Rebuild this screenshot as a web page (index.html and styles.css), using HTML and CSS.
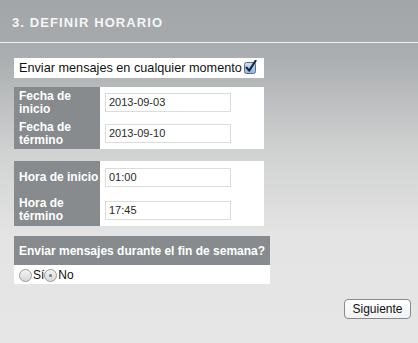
FILE: index.html
```html
<!DOCTYPE html>
<html>
<head>
<meta charset="utf-8">
<link rel="stylesheet" href="styles.css">
</head>
<body>
<div class="page">
  <div class="header"><h1 class="title">3. DEFINIR HORARIO</h1></div>
  <div class="content">
    <div class="anytime">
      <span class="anytime-text">Enviar mensajes en cualquier momento</span>
      <svg class="check" width="13" height="14" viewBox="0 0 13 14">
        <defs><linearGradient id="cb" x1="0" y1="0" x2="0" y2="1"><stop offset="0" stop-color="#cfe0f2"/><stop offset="1" stop-color="#8fb4de"/></linearGradient></defs>
        <rect x="0.5" y="2.5" width="11" height="11" rx="2" fill="url(#cb)" stroke="#5b6f88"/>
        <path d="M2.6 7.6 L5.2 10.6 L11.6 0.8" fill="none" stroke="#13233f" stroke-width="2.1" stroke-linecap="round" stroke-linejoin="round"/>
      </svg>
    </div>

    <div class="form-table dates">
      <div class="label">Fecha de inicio</div>
      <div class="value"><div class="input">2013-09-03</div></div>
      <div class="label">Fecha de término</div>
      <div class="value"><div class="input">2013-09-10</div></div>
    </div>

    <div class="form-table hours">
      <div class="label">Hora de inicio</div>
      <div class="value"><div class="input">01:00</div></div>
      <div class="label">Hora de término</div>
      <div class="value"><div class="input">17:45</div></div>
    </div>

    <div class="weekend">
      <div class="weekend-head">Enviar mensajes durante el fin de semana?</div>
      <div class="weekend-opts">
        <span class="radio"></span><span class="opt">Sí</span>
        <span class="radio on"></span><span class="opt">No</span>
      </div>
    </div>

    <div class="actions"><button class="btn">Siguiente</button></div>
  </div>
</div>
</body>
</html>
```
FILE: styles.css
```css
html, body { margin: 0; padding: 0; }
body { font-family: "Liberation Sans", Arial, sans-serif; }
.page {
  width: 418px;
  height: 343px;
  background: linear-gradient(to bottom, #a3a6a9 0px, #acafb1 60px, #d0d1d1 150px, #e4e4e4 235px, #e6e6e6 343px);
  overflow: hidden;
}
.header {
  height: 43px;
  border-bottom: 1px solid #f2f2f2;
  padding-left: 12px;
  box-sizing: border-box;
  background: linear-gradient(to bottom, #a3a6a9, #a7aaac);
}
.title {
  margin: 0;
  padding-top: 15px;
  font-size: 13px;
  font-weight: bold;
  letter-spacing: 1.1px;
  color: #f6f6f6;
  line-height: 15px;
}
.content { padding: 15px 7px 0 14px; }
.anytime {
  width: 250px;
  height: 20px;
  background: #fff;
  display: flex;
  align-items: center;
  padding-left: 5px;
  box-sizing: border-box;
  font-size: 12.7px;
  color: #111;
}
.anytime-text { white-space: nowrap; flex-shrink: 0; }
.check { margin-left: 2px; margin-top: -2px; flex-shrink: 0; }
.form-table {
  width: 250px;
  display: grid;
  grid-template-columns: 86px 164px;
  background: #fff;
}
.dates { margin-top: 9px; grid-template-rows: 31px 31px; }
.hours { margin-top: 12px; grid-template-rows: 33px 32px; }
.label {
  background: #878b8e;
  color: #fff;
  font-weight: bold;
  font-size: 12px;
  line-height: 13px;
  padding: 3px 0 0 5px;
  box-sizing: border-box;
}
.hours .label:first-child { display: flex; align-items: center; padding-top: 0; }
.value { display: flex; align-items: center; padding-left: 5px; }
.input {
  width: 126px;
  height: 19px;
  box-sizing: border-box;
  border: 1px solid #dcdcdc;
  background: #fff;
  font-size: 11px;
  line-height: 17px;
  padding-left: 3px;
  color: #2a2a2a;
}
.weekend { width: 256px; margin-top: 10px; }
.weekend-head {
  height: 29px;
  background: #878b8e;
  color: #fff;
  font-weight: bold;
  font-size: 12px;
  padding-left: 5px;
  display: flex;
  align-items: center;
}
.weekend-opts {
  height: 19px;
  background: #fff;
  display: flex;
  align-items: center;
  padding-left: 5px;
  font-size: 12px;
  color: #111;
}
.radio {
  width: 11px;
  height: 11px;
  border-radius: 50%;
  border: 1px solid #9a9a9a;
  background: linear-gradient(to bottom, #f4f4f4, #d8d8d8);
  display: inline-flex;
  align-items: center;
  justify-content: center;
  margin-top: 1px;
}
.radio.on::after {
  content: "";
  width: 3px;
  height: 3px;
  border-radius: 50%;
  background: #777;
}
.opt { margin-left: 1px; }
.actions { display: flex; justify-content: flex-end; margin-top: 15px; }
.btn {
  font-family: "Liberation Sans", Arial, sans-serif;
  font-size: 12px;
  height: 20px;
  width: 67px;
  padding: 0;
  border: 1px solid #8a8a8a;
  border-radius: 4px;
  background: linear-gradient(to bottom, #ffffff, #f1f1f1);
  color: #111;
}
```
